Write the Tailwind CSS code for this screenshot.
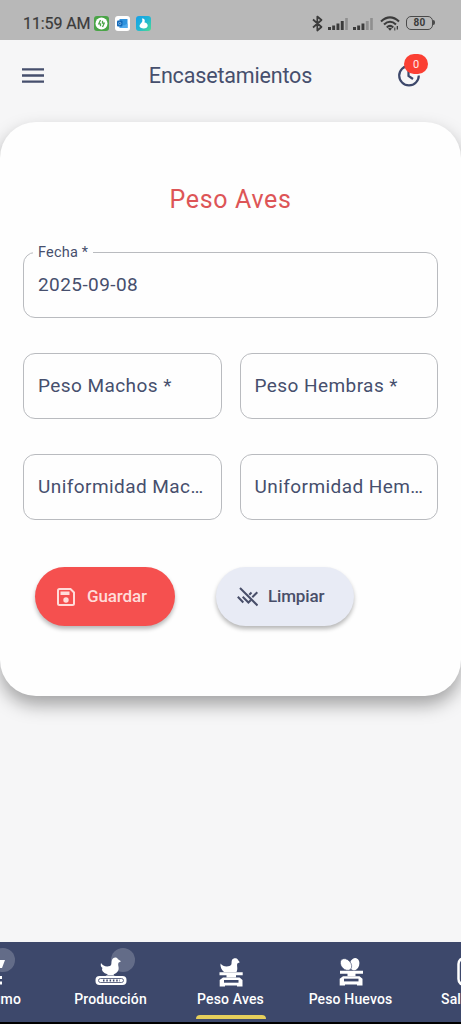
<!DOCTYPE html>
<html lang="es">
<head>
<meta charset="utf-8">
<title>Encasetamientos</title>
<script src="https://cdn.jsdelivr.net/npm/@tailwindcss/browser@4"></script>
</head>
<body class="w-[461px] h-[1024px] overflow-hidden bg-[#f6f6f7] font-['Roboto',sans-serif] text-[#464f6d] flex flex-col">
<!-- status bar -->
<div class="h-10 shrink-0 bg-[#b8b8b8] flex items-center pl-[23px] pt-[6px] text-[#3b3b3b]">
  <span class="text-[16px] leading-none w-[71px] whitespace-nowrap tracking-[-0.1px] pt-[2px] [-webkit-text-stroke:0.2px_#3b3b3b]">11:59 AM</span>
  <svg class="w-[15px] h-[15px]" viewBox="0 0 15 15"><rect width="15" height="15" rx="3" fill="#4aa447"/><circle cx="7.5" cy="7.5" r="6" fill="#fff"/><path d="M6.500 4 4.800 7.800h1.700v2.400M8.500 11l1.700-3.800H8.500V4.800" fill="none" stroke="#4aa447" stroke-width="1.300"/></svg>
  <svg class="w-[15px] h-[15px] ml-[6px]" viewBox="0 0 15 15"><rect width="15" height="15" rx="3" fill="#fff"/><path d="M4.500 3h8v9h-8z" fill="#2f93de"/><path d="m5 7.500 4 2 3.500-2V12H5z" fill="#4fa9ec"/><rect x="2" y="4.500" width="5.500" height="6" rx="1" fill="#1268b8"/><circle cx="4.700" cy="7.500" r="1.200" fill="none" stroke="#9cc8ee" stroke-width=".7"/></svg>
  <svg class="w-[15px] h-[15px] ml-[6px]" viewBox="0 0 15 15"><defs><linearGradient id="g" x1="0" y1="0" x2="1" y2="1"><stop stop-color="#149ee8"/><stop offset=".5" stop-color="#1fb5d6"/><stop offset="1" stop-color="#4fdc8c"/></linearGradient></defs><rect width="15" height="15" rx="3" fill="url(#g)"/><path d="M6 2.500c1.500-.5 3 .6 2.800 2.200L8.500 6.500c2 .2 3.200 1.500 3.200 3 0 1.800-1.700 3-4 3S3.500 11.600 3.500 10C3.500 8.500 5 7.500 6 6c.6-1 .3-2.200 0-3.500z" fill="#fff"/></svg>
  <svg class="w-[13px] h-[17px] ml-[160px]" viewBox="0 0 13 17"><path d="m2 4.500 8.500 7.500-4.200 3.500V1.500L10.500 5 2 12.500" fill="none" stroke="#3b3b3b" stroke-width="1.700" stroke-linejoin="round"/></svg>
  <svg class="w-[21px] h-[13px] ml-[4px]" viewBox="0 0 21 13"><path d="M0 10h3v3H0zM4.200 8.500h2.900V13H4.200zM8.500 6.500h2.900V13H8.500zM12.800 4h2.900v9h-2.900z" fill="#3b3b3b"/><path d="M17.200 1h2.600v12h-2.600z" fill="#8f8f8f"/></svg>
  <svg class="w-[21px] h-[13px] ml-[4px]" viewBox="0 0 21 13"><path d="M0 10h3v3H0zM4.200 8.500h2.900V13H4.200zM8.500 6.500h2.900V13H8.500z" fill="#3b3b3b"/><path d="M12.800 4h2.900v9h-2.900zM17.200 1h2.600v12h-2.600z" fill="#8f8f8f"/></svg>
  <svg class="w-[20px] h-[15px] ml-[6px]" viewBox="0 0 20 15"><path d="M1 5.500Q10-2.700 19 5.500M4 8.500q6-5.500 12 0M6.800 11.400q3.200-3 6.400 0" fill="none" stroke="#3b3b3b" stroke-width="2.100"/><path d="m10 14.800-2-2.200q2-1.500 4 0zM14.300 11.500h1v3h-1zM16.700 10h1.300v3.500h-1.300z" fill="#3b3b3b"/></svg>
  <div class="relative ml-[6px] w-[27px] h-[14px] rounded-[5px] border-[1.500px] border-[#4a4a4a] flex items-center justify-center text-[10px] leading-none font-bold tracking-[0.3px]">80<span class="absolute -right-[3px] top-[3px] w-[2px] h-[5px] bg-[#4a4a4a] rounded-r"></span></div>
</div>
<!-- app bar -->
<header class="h-[71px] shrink-0 grid grid-cols-[100px_1fr_100px] items-center">
  <svg class="w-[22px] h-[15px] ml-[22px]" viewBox="0 0 22 15"><path d="M0 1.300h22M0 7.500h22M0 13.700h22" stroke="#464f6d" stroke-width="2.300"/></svg>
  <h1 class="text-center text-[21.5px] leading-none tracking-[-0.17px] whitespace-nowrap">Encasetamientos</h1>
  <div class="relative w-[22px] h-[22px] ml-[37px]">
    <svg class="w-[22px] h-[22px]" viewBox="0 0 22 22"><path d="M11 .8a9.800 9.800 0 1 0 9.800 9.800M10.500 4.500V11l4.500 3" fill="none" stroke="#3d486b" stroke-width="2.200"/></svg>
    <span class="absolute left-[6px] -top-[11px] w-[24px] h-[20px] rounded-full bg-[#fb3f33] text-white/90 text-[11px] leading-[21px] text-center">0</span>
  </div>
</header>
<!-- form card -->
<main class="mt-[11px] h-[574px] shrink-0 rounded-[36px] bg-[#fefefe] shadow-[0_9px_18px_rgba(0,0,0,0.34)] px-[23px]">
  <h2 class="pt-[64px] text-center text-[25px] leading-[28px] tracking-[0.65px] text-[#dd5557]">Peso Aves</h2>
  <form class="mt-[38px] flex flex-col gap-[35px] text-[19px] tracking-[0.43px]">
    <div class="relative h-[66px] w-[415px] rounded-[12px] border-[1.500px] border-[#b9bbbf] flex items-center pl-[14px]">
      <span class="absolute -top-[9px] left-[9px] h-[18px] px-[5px] bg-[#fefefe] text-[14.500px] leading-[18px] tracking-[0.2px]">Fecha *</span>
      <span>2025-09-08</span>
    </div>
    <div class="grid grid-cols-2 gap-x-[18px] gap-y-[35px] w-[415px]">
      <label class="h-[66px] rounded-[12px] border-[1.500px] border-[#b9bbbf] flex items-center pl-[14px] whitespace-nowrap">Peso Machos *</label>
      <label class="h-[66px] rounded-[12px] border-[1.500px] border-[#b9bbbf] flex items-center pl-[14px] whitespace-nowrap">Peso Hembras *</label>
      <label class="h-[66px] rounded-[12px] border-[1.500px] border-[#b9bbbf] flex items-center pl-[14px] whitespace-nowrap">Uniformidad Mac…</label>
      <label class="h-[66px] rounded-[12px] border-[1.500px] border-[#b9bbbf] flex items-center pl-[14px] whitespace-nowrap">Uniformidad Hem…</label>
    </div>
    <div class="mt-[12px] ml-[12px] flex gap-[41px] text-[17px] font-medium tracking-[-0.15px]">
      <button type="button" class="w-[140px] h-[59px] rounded-full bg-[#f5504f] text-[#ffdcd9] shadow-[0_3px_4px_rgba(0,0,0,0.28)] flex items-center pl-[22px] gap-[12px]">
        <svg class="w-[18px] h-[18px]" viewBox="0 0 18 18"><path d="M1 2.500Q1 1 2.500 1h11L17 4.500v11q0 1.500-1.500 1.500h-13Q1 17 1 15.500z" fill="none" stroke="currentColor" stroke-width="2"/><path d="M3.500 3.500h9V7h-9z" fill="currentColor"/><circle cx="9" cy="12" r="2.700" fill="currentColor"/></svg>
        <span>Guardar</span>
      </button>
      <button type="button" class="w-[138px] h-[59px] rounded-full bg-[#e8ebf5] text-[#484e69] shadow-[0_3px_4px_rgba(0,0,0,0.28)] flex items-center pl-[21px] gap-[10px]">
        <svg class="w-[21px] h-[20px]" viewBox="0 0 21 20"><path d="m3 1 17.500 17.500M.8 9.800l5.500 5.700M5.700 9.800l5.700 5.700 2.300-2.300M20.300 5.200l-5 5M14.500 5.500l-2.200 2.200" fill="none" stroke="currentColor" stroke-width="2"/></svg>
        <span>Limpiar</span>
      </button>
    </div>
  </form>
</main>
<!-- bottom tabs -->
<nav class="mt-auto h-[82px] shrink-0 bg-[#3d486b] border-b-2 border-black flex justify-center overflow-hidden text-white text-[14px] leading-[18px] font-medium tracking-[0.15px]">
  <div class="w-[120px] shrink-0 flex flex-col items-center pt-[14px]">
    <div class="relative w-[32px] h-[34px]">
      <svg class="w-8 h-8" viewBox="0 0 32 32"><path d="M4 4h26l-3 8H7z" fill="#fff"/><path d="M16 20h11v3h-2.500v2.500H27v3H16z" fill="#fff"/></svg>
      <span class="absolute left-[16px] -top-[8px] w-6 h-6 rounded-full bg-white/20"></span>
    </div>
    <span>Consumo</span>
  </div>
  <div class="w-[120px] shrink-0 flex flex-col items-center pt-[14px]">
    <div class="relative w-[32px] h-[34px]">
      <svg class="w-8 h-8" viewBox="0 0 32 32"><path d="M6 7c2 3 5 4 9 3 2-1 1-3 2-6 .6-3 5-3.500 6-.7l3 2-2.500 1.500c-1 3 .8 4 0 7-.8 2.500-3 4-5 4.500l1 1.200h-9l2.500-1C8 17 6 14 7.500 12 5.700 11 5.500 9 6 7z" fill="#fff"/><rect x=".5" y="20" width="31" height="9" rx="4" fill="#fff"/><rect x="3.500" y="22.500" width="25" height="4" rx="2" fill="none" stroke="#3d486b" stroke-width=".8"/><path d="M8 24.500h17" stroke="#3d486b" stroke-width="2" stroke-dasharray="1.500 1.800"/></svg>
      <span class="absolute left-[16px] -top-[8px] w-6 h-6 rounded-full bg-white/20"></span>
    </div>
    <span>Producción</span>
  </div>
  <div class="w-[120px] shrink-0 flex flex-col items-center pt-[14px]">
    <svg class="w-8 h-[34px]" viewBox="0 0 32 34"><path d="M5.500 7.500c2 3 6 3.500 9 2.500 3-1 1.500-3 2.500-6 1-2.500 5.500-2.500 6 0l1.800 2.200-2.500 1.300c-.8 3 1 5-.8 8.500H9C6.500 14 5 10.500 5.500 7.500z" fill="#fff"/><path d="M4.500 16.300h23.200v2.900H21v2.300h-9.500v-2.300H4.500z" fill="#fff"/><path d="M8 21.500h16.500L27.500 24v6.500h-5.500v-1h-12v1H4.700V24z" fill="#fff"/><rect x="9" y="24" width="14.500" height="2.700" fill="#3d486b"/></svg>
    <span>Peso Aves</span>
    <span class="mt-[7px] w-[70px] h-[4px] rounded-t-[4px] bg-[#e6cf5b]"></span>
  </div>
  <div class="w-[120px] shrink-0 flex flex-col items-center pt-[14px]">
    <svg class="w-8 h-[34px]" viewBox="0 0 32 34"><ellipse cx="19.500" cy="8.200" rx="4.800" ry="6.200" transform="rotate(18 19.500 8.200)" fill="#fff"/><ellipse cx="11" cy="8.500" rx="4.800" ry="6.600" transform="rotate(-42 11 8.500)" fill="#fff" stroke="#3d486b" stroke-width=".6"/><path d="M5 14.800h23v2.900h-7.500v2.500h-8v-2.500H5z" fill="#fff"/><path d="M8 20.200h16.500l3 2.500v6.800H22v-1H10v1H4.700v-6.800z" fill="#fff"/><rect x="9" y="22.700" width="14.500" height="2.700" fill="#3d486b"/></svg>
    <span>Peso Huevos</span>
  </div>
  <div class="w-[120px] shrink-0 flex flex-col items-center pt-[14px]">
    <svg class="w-8 h-[34px]" viewBox="0 0 32 34"><rect x="3.500" y="2" width="25" height="27" rx="6" fill="none" stroke="#fff" stroke-width="2.500"/></svg>
    <span class="w-[59px] whitespace-nowrap">Salidas</span>
  </div>
</nav>
</body>
</html>
